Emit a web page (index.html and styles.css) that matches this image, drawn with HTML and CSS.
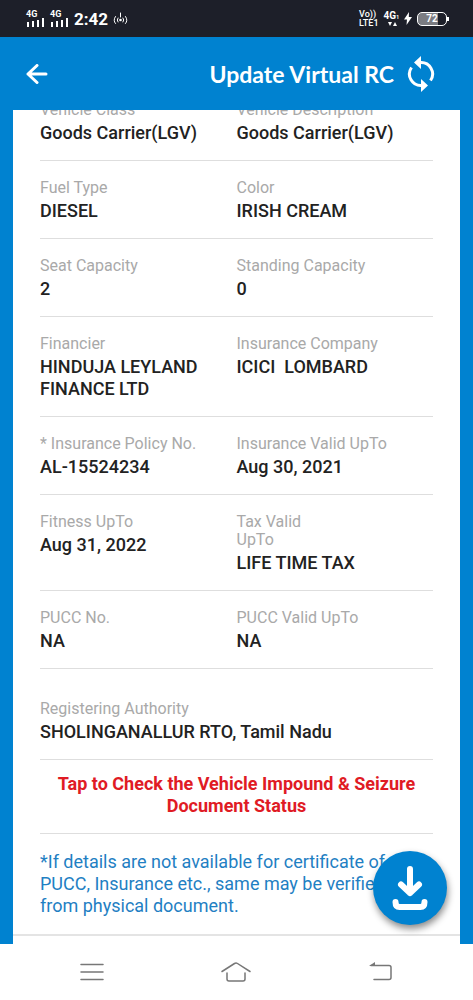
FILE: index.html
```
<!DOCTYPE html>
<html lang="en">
<head>
  <meta charset="UTF-8" />
  <meta name="viewport" content="width=device-width, initial-scale=1" />
  <title>Update Virtual RC</title>
  <link rel="stylesheet" href="styles.css">
</head>
<body>
  <div class="status-bar">
    <div class="status-left">
      <div class="signal">
        <span>4G</span>
        <svg width="19" height="9" viewBox="0 0 19 9"><path d="M2 4v5M7 3v6M12 2v7M17 0v9" /></svg>
      </div>
      <div class="signal">
        <span>4G</span>
        <svg width="19" height="9" viewBox="0 0 19 9"><path d="M2 4v5M7 3v6M12 2v7M17 0v9" /></svg>
      </div>
      <span class="time">2:42</span>
      <svg class="hotspot" width="15" height="14" viewBox="0 0 15 14">
        <path d="M2.5 4.5q-2.8 4 0 7M5 6q-1.6 2 0 4M12.5 4.5q2.8 4 0 7M10 6q1.6 2 0 4M7.5 1v4" />
        <circle cx="7.5" cy="8" r="1.3" />
      </svg>
    </div>
    <div class="status-right">
      <div class="volte"><span>Vo))</span><span>LTE1</span></div>
      <div class="network">
        <span>4G<small>1</small></span>
        <svg width="9" height="4" viewBox="0 0 9 4"><path d="M0 0h4L2 4zM5 4h4L7 0z" /></svg>
      </div>
      <svg class="bolt" width="8" height="13" viewBox="0 0 8 13"><path d="M5 0L0 7.5h3L2.5 13 8 5H4.800z" /></svg>
      <div class="battery"><span>72</span></div>
    </div>
  </div>

  <header class="app-bar">
    <button class="icon-btn" aria-label="Back">
      <svg width="22" height="20" viewBox="0 0 22 20"><path d="M20 10H2M11 1.5L2 10l9 8.5" /></svg>
    </button>
    <h1>Update Virtual RC</h1>
    <button class="icon-btn sync" aria-label="Refresh">
      <svg width="28" height="36" viewBox="0 0 28 36">
        <path class="arc" d="M13 6.5A11.5 11.5 0 0 1 23.5 24.5M15 29.5A11.5 11.5 0 0 1 4.5 11.5" />
        <path class="tip" d="M14 0v13L7 6.5zM14 23v13l7-6.5z" />
      </svg>
    </button>
  </header>

  <main class="screen">
    <div class="card">
      <dl class="details">
        <div class="row">
          <div class="field"><dt>Vehicle Class</dt><dd>Goods Carrier(LGV)</dd></div>
          <div class="field"><dt>Vehicle Description</dt><dd>Goods Carrier(LGV)</dd></div>
        </div>
        <div class="row">
          <div class="field"><dt>Fuel Type</dt><dd>DIESEL</dd></div>
          <div class="field"><dt>Color</dt><dd>IRISH CREAM</dd></div>
        </div>
        <div class="row">
          <div class="field"><dt>Seat Capacity</dt><dd>2</dd></div>
          <div class="field"><dt>Standing Capacity</dt><dd>0</dd></div>
        </div>
        <div class="row">
          <div class="field"><dt>Financier</dt><dd>HINDUJA LEYLAND FINANCE LTD</dd></div>
          <div class="field"><dt>Insurance Company</dt><dd>ICICI  LOMBARD</dd></div>
        </div>
        <div class="row">
          <div class="field"><dt>* Insurance Policy No.</dt><dd>AL-15524234</dd></div>
          <div class="field"><dt>Insurance Valid UpTo</dt><dd>Aug 30, 2021</dd></div>
        </div>
        <div class="row">
          <div class="field"><dt>Fitness UpTo</dt><dd>Aug 31, 2022</dd></div>
          <div class="field"><dt>Tax Valid<br>UpTo</dt><dd>LIFE TIME TAX</dd></div>
        </div>
        <div class="row">
          <div class="field"><dt>PUCC No.</dt><dd>NA</dd></div>
          <div class="field"><dt>PUCC Valid UpTo</dt><dd>NA</dd></div>
        </div>
        <div class="row row-full">
          <div class="field"><dt>Registering Authority</dt><dd>SHOLINGANALLUR RTO, Tamil Nadu</dd></div>
        </div>
      </dl>
      <button class="impound">Tap to Check the Vehicle Impound &amp; Seizure Document Status</button>
      <p class="note">*If details are not available for certificate of PUCC, Insurance etc., same may be verified from physical document.</p>
    </div>
    <button class="fab" aria-label="Download">
      <svg width="36" height="44" viewBox="0 0 36 44">
        <path d="M18 3v24M9 18.500L18 27l9-8.500" />
        <path d="M3.500 36q0 5 4 5h21q4 0 4-5" />
      </svg>
    </button>
  </main>

  <nav class="nav-bar">
    <button aria-label="Recent apps">
      <svg width="32" height="22" viewBox="0 0 32 22"><path d="M5 3.500h22M5 11h22M5 18.500h22" /></svg>
    </button>
    <button aria-label="Home">
      <svg width="32" height="22" viewBox="0 0 32 22"><path d="M2 10.500L14.500 2.500q1.500-1 3 0L30 10.500M7 12v6q0 2 2 2h14q2 0 2-2v-6" /></svg>
    </button>
    <button aria-label="Back">
      <svg width="32" height="22" viewBox="0 0 32 22"><path d="M6 4.500h18q2 0 2 2v10q0 2-2 2H9" /><path class="tip" d="M4 5l6-4v4z" /></svg>
    </button>
  </nav>
</body>
</html>
```

FILE: styles.css
```
*, *::before, *::after { margin: 0; padding: 0; box-sizing: border-box; }

body {
  font-family: Roboto, "Liberation Sans", sans-serif;
  height: 100vh;
  background: #0082d0;
  display: flex;
  flex-direction: column;
  overflow: hidden;
}

button {
  border: none;
  background: none;
  font-family: inherit;
  cursor: pointer;
}

svg {
  display: block;
  fill: none;
  stroke-linecap: round;
  stroke-linejoin: round;
}

/* status bar */
.status-bar {
  height: 37px;
  padding: 0 26px;
  background: #1d1f29;
  color: #fff;
  display: flex;
  justify-content: space-between;
  align-items: center;
}

.status-left, .status-right {
  display: flex;
  align-items: center;
  gap: 5px;
}

.signal span {
  display: block;
  font-size: 9px;
  font-weight: 700;
  line-height: 8px;
}

.signal svg {
  stroke: #fff;
  stroke-width: 2;
  stroke-linecap: butt;
}

.time {
  font-size: 17px;
  font-weight: 700;
  line-height: 20px;
}

.hotspot { stroke: #fff; }
.hotspot circle { fill: #fff; stroke: none; }

.volte span {
  display: block;
  font-size: 9px;
  font-weight: 500;
  line-height: 9px;
}

.network {
  font-size: 10px;
  font-weight: 700;
  line-height: 10px;
}

.network small { font-size: 5px; }
.network svg { fill: #fff; margin-left: 4px; }
.bolt { fill: #fff; }

.battery {
  width: 30px;
  height: 14px;
  border: 1px solid #fff;
  border-radius: 5px;
  background: linear-gradient(to right, #7b7c82 70%, #1d1f29 70%);
  font-size: 10px;
  font-weight: 700;
  line-height: 12px;
  text-align: center;
  position: relative;
}

.battery::after {
  content: "";
  position: absolute;
  top: 4px;
  right: -3px;
  width: 2px;
  height: 4px;
  background: #fff;
}

/* app bar */
.app-bar {
  height: 73px;
  padding: 0 38px 0 26px;
  display: flex;
  align-items: center;
  color: #fff;
}

.app-bar h1 {
  flex: 1;
  font-family: Lato, sans-serif;
  font-size: 23px;
  font-weight: 700;
  text-align: right;
}

.icon-btn {
  stroke: #fff;
  stroke-width: 3;
}

.sync { margin-left: 13px; }
.sync .arc { stroke-linecap: butt; }
.sync .tip { fill: #fff; stroke: none; }

/* RC details */
.screen {
  flex: 1;
  min-height: 0;
  padding: 0 13px;
  position: relative;
}

.card {
  height: 100%;
  background: #fff;
  overflow: hidden;
}

/* list is scrolled part way into its first row */
.details { margin-top: -27px; }

.row {
  margin: 0 27px;
  padding: 18px 0 16px;
  border-bottom: 1px solid #dedede;
  display: grid;
  grid-template-columns: 1fr 1fr;
}

.row-full {
  grid-template-columns: 1fr;
  padding-top: 31px;
}

dt {
  margin-bottom: 3px;
  font-size: 16px;
  line-height: 18px;
  color: #a9a9a9;
}

dd {
  font-size: 18px;
  font-weight: 500;
  line-height: 22px;
  color: #222;
  white-space: pre-wrap;
}

.impound {
  display: block;
  width: calc(100% - 54px);
  margin: 0 27px;
  padding: 13px 0 16px;
  border-bottom: 1px solid #dedede;
  font-size: 18px;
  font-weight: 700;
  line-height: 22px;
  color: #e01b24;
}

.note {
  padding: 17px 40px 17px 27px;
  border-bottom: 2px solid #e4e4e4;
  font-size: 18px;
  line-height: 22px;
  color: #1f80c3;
}

.fab {
  position: absolute;
  right: 26px;
  bottom: 19px;
  width: 74px;
  height: 74px;
  border-radius: 50%;
  background: #0082d0;
  box-shadow: 1px 4px 7px rgba(0, 0, 0, 0.45);
  display: flex;
  justify-content: center;
  align-items: center;
  stroke: #fff;
  stroke-width: 6;
}

/* system navigation */
.nav-bar {
  height: 56px;
  padding: 0 20px;
  background: #fff;
  display: grid;
  grid-template-columns: repeat(3, 1fr);
  stroke: #777;
  stroke-width: 1.5;
}

.nav-bar button {
  display: flex;
  justify-content: center;
  align-items: center;
}

.nav-bar .tip { fill: #777; stroke: none; }
```
